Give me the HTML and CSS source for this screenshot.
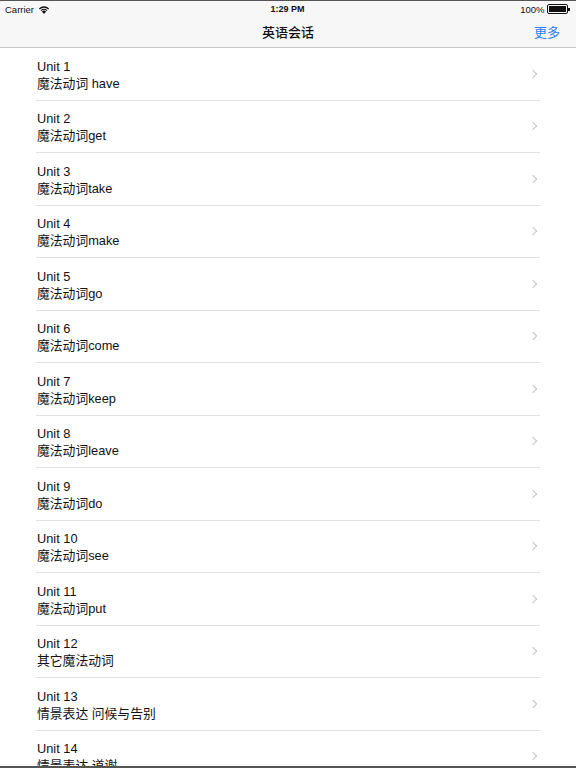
FILE: index.html
```html
<html>
  <head>
    <title>英语会话</title>
    <meta name="viewport" content="width=device-width, initial-scale=1.0" />
    <link rel="stylesheet" href="styles.css">
  </head>
  <body>
    <div class="barra">
      <div class="estado">
        <span class="carrier">Carrier
          <svg class="wifi" width="12" height="9" viewBox="0 0 12 9">
            <path d="M6 9 L3.9 6.6 A3 3 0 0 1 8.1 6.6 Z" fill="#111"/>
            <path d="M2.6 5.2 A4.9 4.9 0 0 1 9.4 5.2 L8.6 6.1 A3.7 3.7 0 0 0 3.4 6.1 Z" fill="#111"/>
            <path d="M0.9 3.4 A7.4 7.4 0 0 1 11.1 3.4 L10.2 4.4 A6.1 6.1 0 0 0 1.8 4.4 Z" fill="#111"/>
          </svg>
        </span>
        <span class="hora">1:29 PM</span>
        <span class="bateria">100%
          <span class="pila"><span class="carga"></span></span><span class="punta"></span>
        </span>
      </div>
      <div class="nav">
        <span class="titulo">英语会话</span>
        <span class="mas">更多</span>
      </div>
    </div>
    <div class="lista">
      <div class="fila"><div class="textos"><div>Unit 1</div><div>魔法动词 have</div></div><span class="flecha"></span></div>
      <div class="fila"><div class="textos"><div>Unit 2</div><div>魔法动词get</div></div><span class="flecha"></span></div>
      <div class="fila"><div class="textos"><div>Unit 3</div><div>魔法动词take</div></div><span class="flecha"></span></div>
      <div class="fila"><div class="textos"><div>Unit 4</div><div>魔法动词make</div></div><span class="flecha"></span></div>
      <div class="fila"><div class="textos"><div>Unit 5</div><div>魔法动词go</div></div><span class="flecha"></span></div>
      <div class="fila"><div class="textos"><div>Unit 6</div><div>魔法动词come</div></div><span class="flecha"></span></div>
      <div class="fila"><div class="textos"><div>Unit 7</div><div>魔法动词keep</div></div><span class="flecha"></span></div>
      <div class="fila"><div class="textos"><div>Unit 8</div><div>魔法动词leave</div></div><span class="flecha"></span></div>
      <div class="fila"><div class="textos"><div>Unit 9</div><div>魔法动词do</div></div><span class="flecha"></span></div>
      <div class="fila"><div class="textos"><div>Unit 10</div><div>魔法动词see</div></div><span class="flecha"></span></div>
      <div class="fila"><div class="textos"><div>Unit 11</div><div>魔法动词put</div></div><span class="flecha"></span></div>
      <div class="fila"><div class="textos"><div>Unit 12</div><div>其它魔法动词</div></div><span class="flecha"></span></div>
      <div class="fila"><div class="textos"><div>Unit 13</div><div>情景表达 问候与告别</div></div><span class="flecha"></span></div>
      <div class="fila"><div class="textos"><div>Unit 14</div><div>情景表达 道谢</div></div><span class="flecha"></span></div>
    </div>
    <div class="borde"></div>
  </body>
</html>
```

FILE: styles.css
```css
body {
  margin: 0;
  background-color: white;
  font-family: "Liberation Sans", "Noto Sans CJK SC", sans-serif;
  color: #111;
  height: 768px;
  overflow: hidden;
  position: relative;
  border-top: 1px solid #555;
  box-sizing: border-box;
}
.barra {
  background-color: #f7f7f8;
  border-bottom: 1px solid #c8c8cc;
}
.estado {
  height: 16px;
  display: flex;
  justify-content: space-between;
  align-items: center;
  padding: 0 6px 0 5px;
  font-size: 9.5px;
}
.carrier, .bateria, .hora {
  flex: 1;
  display: flex;
  align-items: center;
}
.hora {
  justify-content: center;
  font-weight: bold;
  font-size: 9px;
}
.bateria {
  justify-content: flex-end;
}
.wifi {
  margin-left: 4px;
}
.pila {
  margin-left: 3px;
  width: 17px;
  height: 6px;
  border: 1px solid #111;
  border-radius: 2px;
  padding: 1px;
  display: inline-block;
}
.carga {
  display: block;
  height: 100%;
  background-color: #111;
}
.punta {
  width: 1.5px;
  height: 3px;
  background-color: #111;
  display: inline-block;
}
.nav {
  height: 28px;
  padding-bottom: 2px;
  display: flex;
  align-items: center;
  justify-content: center;
  position: relative;
}
.titulo {
  font-size: 13px;
  font-weight: 500;
}
.mas {
  position: absolute;
  right: 16px;
  top: 5px;
  font-size: 13px;
  color: #2f7cf6;
}
.lista {
  padding-left: 36px;
}
.fila {
  height: 52.5px;
  box-sizing: border-box;
  border-bottom: 1px solid #e2e2e4;
  width: 504px;
  display: flex;
  align-items: center;
  justify-content: space-between;
}
.textos {
  font-size: 12.8px;
  line-height: 17px;
  padding-left: 1px;
  padding-top: 2px;
}
.flecha {
  width: 5px;
  height: 5px;
  border-top: 1.3px solid #c4c4c8;
  border-right: 1.3px solid #c4c4c8;
  transform: rotate(45deg);
  margin-right: 4px;
}
.borde {
  position: absolute;
  left: 0;
  right: 0;
  bottom: 0;
  height: 2px;
  background-color: #555;
}
```
